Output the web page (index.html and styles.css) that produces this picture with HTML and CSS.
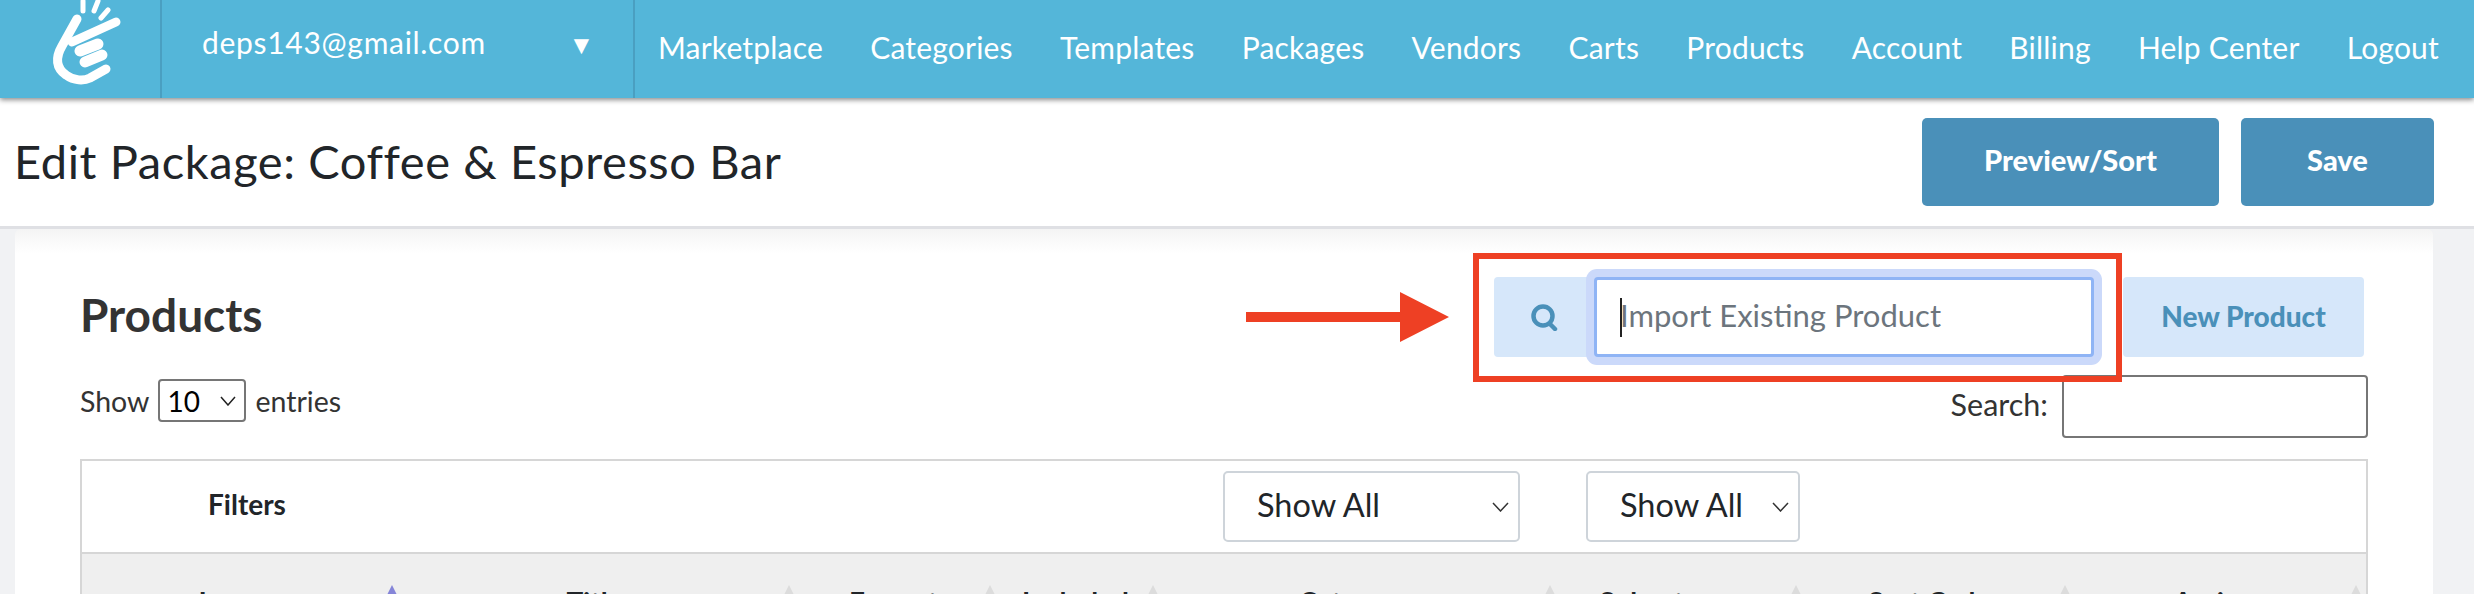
FILE: index.html
```html
<!DOCTYPE html>
<html lang="en" dir="ltr">
    <head>
        <meta charset="utf-8">
        <title>Edit Package</title>
        <link rel="stylesheet" href="styles.css">
    </head>
    <body>
        <nav class="topbar">
            <div class="logo-cell">
                <svg width="160" height="98" viewBox="0 0 160 98" fill="none" stroke="#fff" stroke-linecap="round">
                    <path d="M83 1v10M98 1l-4 10M108 10l-7 8" stroke-width="5"/>
                    <path d="M116 22L72 42" stroke-width="9"/>
                    <path d="M77 19L62 46C55 58 56 68 66 75C74 81 84 81 90 78L106 69" stroke-width="9"/>
                    <path d="M80 51l18-7M85 62l17-7" stroke-width="11"/>
                </svg>
            </div>
            <div class="account-cell">
                <span class="account-email">deps143@gmail.com</span>
                <span class="account-caret">▼</span>
            </div>
            <div class="nav-links">
                <a>Marketplace</a>
                <a>Categories</a>
                <a>Templates</a>
                <a>Packages</a>
                <a>Vendors</a>
                <a>Carts</a>
                <a>Products</a>
                <a>Account</a>
                <a>Billing</a>
                <a>Help Center</a>
                <a>Logout</a>
            </div>
        </nav>

        <header class="page-head">
            <h1>Edit Package: Coffee &amp; Espresso Bar</h1>
            <div class="head-actions">
                <button class="btn-dark btn-preview">Preview/Sort</button>
                <button class="btn-dark btn-save">Save</button>
            </div>
        </header>

        <main class="card">
            <div class="card-head">
                <h2>Products</h2>
                <svg class="arrow" width="203" height="50" viewBox="0 0 203 50">
                    <path d="M0 20h154V0l49 25-49 25V30H0z" fill="#ee4024"/>
                </svg>
                <div class="import-box">
                    <span class="search-addon">
                        <svg width="28" height="27" viewBox="0 0 28 27" fill="none" stroke="#4a90b9" stroke-width="4.5">
                            <circle cx="13" cy="12" r="9.500"/>
                            <path d="M20 20l5 5" stroke-linecap="round"/>
                        </svg>
                    </span>
                    <div class="import-field">
                        <input class="import-input" type="text" placeholder="Import Existing Product">
                        <i class="caret-line"></i>
                    </div>
                    <button class="btn-new">New Product</button>
                    <div class="red-box"></div>
                </div>
            </div>

            <div class="table-tools">
                <label class="length-label">Show
                    <select class="length-select"><option>10</option></select>
                    entries</label>
                <label class="search-label">Search:
                    <input class="search-input" type="text">
                </label>
            </div>

            <div class="table-wrap">
                <div class="filter-row">
                    <b class="filter-title">Filters</b>
                    <div><select class="filter-select filter-one"><option>Show All</option></select></div>
                    <div><select class="filter-select filter-two"><option>Show All</option></select></div>
                </div>
                <div class="column-row">
                    <span class="col sorted">Image</span>
                    <span class="col">Title</span>
                    <span class="col">Format</span>
                    <span class="col">Included</span>
                    <span class="col">Category</span>
                    <span class="col">Subcategory</span>
                    <span class="col">Sort Order</span>
                    <span class="col">Action</span>
                </div>
            </div>
        </main>
    </body>
</html>
```

FILE: styles.css
```css
* {
    box-sizing: border-box;
}

html, body {
    height: 594px;
    overflow: hidden;
}

body {
    margin: 0;
    background: #f1f2f4;
    font-family: "Lato", "Liberation Sans", sans-serif;
    color: #212529;
}

/* top bar */
.topbar {
    display: flex;
    height: 98px;
    background: #54b6d9;
    box-shadow: 0 2px 5px rgba(0, 0, 0, .45);
    position: relative;
    z-index: 2;
    color: #fff;
}

.logo-cell {
    width: 162px;
    border-right: 2px solid #4a9fc1;
}

.logo-cell svg {
    display: block;
}

.account-cell {
    display: flex;
    justify-content: space-between;
    width: 473px;
    padding: 24px 38px 0 40px;
    border-right: 2px solid #4a9fc1;
    font-size: 30px;
    letter-spacing: .7px;
}

.account-caret {
    font-size: 26px;
    line-height: 40px;
}

.nav-links {
    display: flex;
    flex: 1;
    justify-content: space-between;
    padding: 29px 35px 0 23px;
    font-size: 30px;
    letter-spacing: .2px;
}

/* page title */
.page-head {
    display: flex;
    align-items: center;
    justify-content: space-between;
    height: 131px;
    padding: 0 40px 0 14px;
    background: #fff;
    border-bottom: 3px solid #dfe0e4;
}

h1 {
    margin: -2px 0 0;
    font-size: 47px;
    font-weight: 400;
    letter-spacing: .6px;
}

.head-actions {
    display: flex;
    gap: 22px;
}

.btn-dark {
    height: 88px;
    padding-bottom: 6px;
    border: 0;
    border-radius: 5px;
    background: #4a90b9;
    color: #fff;
    font: 900 29px "Lato", "Liberation Sans", sans-serif;
}

.btn-preview {
    width: 297px;
}

.btn-save {
    width: 193px;
}

/* products card */
.card {
    height: 400px;
    margin: 0 41px 0 15px;
    padding: 0 65px;
    background: linear-gradient(#f4f4f4, #fff 24px);
    border-radius: 6px 6px 0 0;
}

.card-head {
    display: flex;
    align-items: center;
    padding: 48px 4px 0 0;
}

h2 {
    flex: 1;
    margin: -6px 0 0;
    font-size: 46px;
    font-weight: 700;
    color: #333;
}

.arrow {
    margin-right: 45px;
}

.import-box {
    display: flex;
    position: relative;
}

.search-addon {
    display: flex;
    align-items: center;
    justify-content: center;
    width: 100px;
    height: 80px;
    background: #d6e7fa;
    border-radius: 4px 0 0 4px;
}

.import-field {
    position: relative;
    width: 500px;
}

.import-input {
    display: block;
    width: 100%;
    height: 80px;
    padding: 0 0 5px 23px;
    border: 3px solid #8fb4f5;
    border-radius: 4px;
    box-shadow: 0 0 0 8px #cbd9fa;
    outline: none;
    font: 31px "Lato", "Liberation Sans", sans-serif;
}

.import-input::placeholder {
    color: #6c757d;
    opacity: 1;
}

.caret-line {
    position: absolute;
    left: 26px;
    top: 21px;
    width: 2px;
    height: 39px;
    background: #222;
}

.btn-new {
    width: 241px;
    height: 80px;
    margin-left: 29px;
    padding-bottom: 4px;
    border: 0;
    border-radius: 4px;
    background: #d6e7fa;
    color: #4a90b9;
    font: 900 28px "Lato", "Liberation Sans", sans-serif;
}

.red-box {
    position: absolute;
    left: -21px;
    top: -24px;
    width: 649px;
    height: 129px;
    border: 6px solid #ee4024;
    z-index: 1;
}

/* show entries and search */
.table-tools {
    display: flex;
    justify-content: space-between;
    align-items: flex-start;
    margin-top: 18px;
    height: 63px;
    font-size: 28.5px;
    color: #333;
}

.length-label {
    display: flex;
    align-items: center;
    gap: 9px;
    margin-top: 4px;
}

.length-select {
    width: 88px;
    height: 43px;
    padding-left: 7px;
    border: 2px solid #767676;
    border-radius: 4px;
    appearance: none;
    background: #fff url("data:image/svg+xml,%3Csvg xmlns='http://www.w3.org/2000/svg' width='16' height='10'%3E%3Cpath d='M1 1l7 8 7-8' fill='none' stroke='%23222' stroke-width='1.5'/%3E%3C/svg%3E") no-repeat right 8px center;
    font: 28px "Lato", "Liberation Sans", sans-serif;
    color: #000;
}

.search-label {
    display: flex;
    align-items: flex-start;
    gap: 14px;
    font-size: 30.5px;
    line-height: 58px;
}

.search-input {
    width: 306px;
    height: 63px;
    border: 2px solid #767676;
    border-radius: 4px;
}

/* table */
.table-wrap {
    margin-top: 21px;
    border: 2px solid #d6d6d6;
    border-bottom: 0;
    height: 200px;
}

.filter-row {
    display: grid;
    grid-template-columns: 1141px 363px 1fr;
    align-items: center;
    height: 93px;
    border-bottom: 2px solid #d6d6d6;
}

.filter-title {
    padding: 0 0 6px 126px;
    font-size: 28px;
}

.filter-select {
    display: block;
    height: 71px;
    padding: 0 0 4px 32px;
    border: 2px solid #ced4da;
    border-radius: 5px;
    appearance: none;
    background: #fff url("data:image/svg+xml,%3Csvg xmlns='http://www.w3.org/2000/svg' width='17' height='10'%3E%3Cpath d='M1 1l7.5 8 7.5-8' fill='none' stroke='%23333' stroke-width='1.5'/%3E%3C/svg%3E") no-repeat right 9px center;
    font: 32.5px "Lato", "Liberation Sans", sans-serif;
    color: #212529;
}

.filter-one {
    width: 297px;
}

.filter-two {
    width: 214px;
}

.column-row {
    display: grid;
    grid-template-columns: 320px 397px 201px 163px 397px 246px 269px 1fr;
    height: 100px;
    padding-top: 31px;
    background: #efefef;
    font-size: 28px;
    font-weight: 700;
    line-height: 34px;
}

/* 排序三角 */
.col {
    position: relative;
    padding-right: 12px;
    text-align: center;
}

.col::after {
    content: '';
    position: absolute;
    right: 4px;
    top: 0;
    border: 6px solid transparent;
    border-top: 0;
    border-bottom: 12px solid #dcdcdc;
}

.sorted::after {
    border-bottom-color: #8585d8;
}
```
